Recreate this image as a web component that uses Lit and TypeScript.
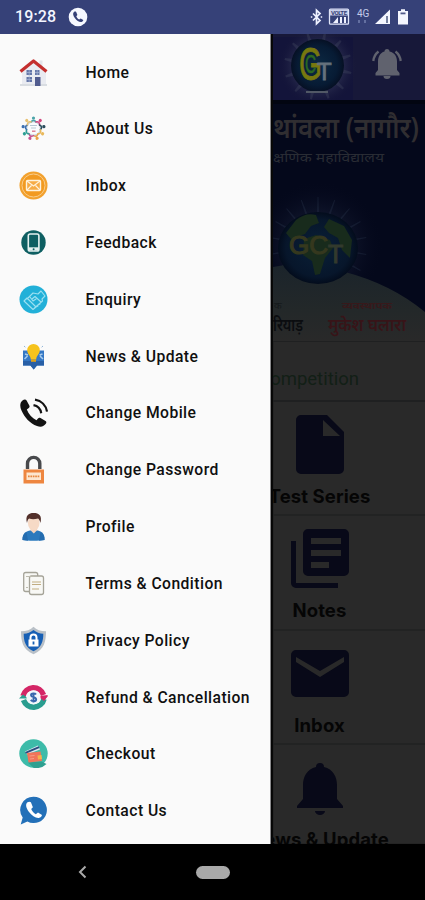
import { LitElement, html, svg, css } from "lit";
import { customElement } from "lit/decorators.js";

const spin = (n: number, d: (a: number, i: number) => unknown) =>
  Array.from({ length: n }, (_, i) => d((i * 360) / n, i));

const dots = ["#4aa3a8", "#d3447c", "#2b4d5c", "#e9b85a", "#e9a24a", "#c9508f", "#2c9f93", "#3c6fb0", "#e8c070"];

const icons = {
  home: svg`<path d="M3 14 15 4l12 10v12H3z" fill="#e9ebf1"/><path d="M1 26h27v2H1z" fill="#d9dde2"/>
    <path d="M20.500 2.500h3v6h-3z" fill="#e3e5ea"/>
    <path d="M1.500 13.500 14.500 3 27.500 13.500" fill="none" stroke="#c42f2e" stroke-width="3.200" stroke-linejoin="round"/>
    <path d="M7.500 12h5.500v5H7.500zM16 12h4.500v5H16zM7.500 19h5.500v5H7.500z" fill="#6476a8"/><path d="M16 19h5.500v9H16z" fill="#505b8e"/>
    <path d="M10.200 12v12M7 14.500h6M18.200 12v5M16 14.500h4.500M7 21.500h6" stroke="#a9b6d4" stroke-width=".7"/>`,
  about: svg`<circle cx="14.500" cy="14.500" r="7" fill="#fafbfc" stroke="#c3d2de" stroke-width="1.500"/>
    ${spin(9, (a, i) => svg`<g transform=${`rotate(${a} 14.500 14.500)`}><circle cx="14.500" cy="4" r="1.600" fill=${dots[i]}/><path d="M11.800 8.300q2.700-4 5.400 0" fill="none" stroke=${dots[i]} stroke-width="1.500"/></g>`)}
    <path d="M11 11.500h7M12 14h5" stroke="#b7c9d4" stroke-width="1"/><path d="M13 17.200h3.500" stroke="#d9728a" stroke-width="1.300"/>`,
  inbox: svg`<circle cx="14.500" cy="14.500" r="14" fill="#f2a12e"/><circle cx="14.500" cy="14.500" r="11.500" fill="#f29a20" stroke="#f9cd8c" stroke-width="1"/>
    <rect x="7.500" y="9.500" width="14" height="10" rx="1" fill="#f6ab45" stroke="#fff2dc" stroke-width="1.400"/>
    <path d="m8 10 6.500 5 6.500-5M8 19l4.500-4.500M21 19l-4.500-4.500" fill="none" stroke="#fff2dc" stroke-width="1.200"/>`,
  feedback: svg`<circle cx="14.500" cy="14.500" r="12.200" fill="#0e5f62"/><rect x="9.300" y="6" width="10.600" height="17" rx="1.800" fill="#0e5f62" stroke="#e4f1f0" stroke-width="1.600"/>
    <path d="M9.500 19.300h10.300v3.200H9.500z" fill="#e4f1f0"/><circle cx="14.600" cy="21.200" r="1" fill="#0e5f62"/>`,
  enquiry: svg`<circle cx="14.500" cy="14.500" r="14" fill="#22b0d8"/><g fill="none" stroke="#9be0f1" stroke-width="1.100" stroke-linejoin="round" stroke-linecap="round">
    <path d="m5 16 3-3 9 9-3 2.500zM8 14l6-6 5 1 3-3 4 5-3 3 .5 2-8 7M13 14l3-2.500 6 5.500M11 12l3 4 3-2M17 22l2-1M19 20l2-1"/></g>`,
  news: svg`<path d="M4 8.500h21v15h-7l-3.300 4-3.300-4H4z" fill="#3477c4"/><path d="M4 19h21v4.500h-7l-3.300 4-3.300-4H4z" fill="#285fa6"/>
    <path d="m5.500 17 3-3M24 17l-3-3M6 12l3 1M23.500 12l-3 1" stroke="#a8cced" stroke-width="1.500"/>
    <path d="M14.500 2a6.300 6.300 0 0 1 6.300 6.300c0 4-3.300 5-3.600 9.200h-5.400c-.3-4.200-3.600-5.200-3.600-9.200A6.300 6.300 0 0 1 14.500 2z" fill="#f6c31c"/>
    <path d="M12 17.500h5v2.300h-5z" fill="#dfa018"/><path d="m5 4 1.300 1.200M24 4l-1.300 1.200" stroke="#8fb4d8"/>`,
  mobile: svg`<path d="M3.500 2.500C1 4.500.5 8 2.500 12.500 5.500 19.500 11 25.500 18 28c4 1.400 7 .5 9-2.500.6-1 .4-1.800-.5-2.400L21.500 20c-1-.6-1.800-.4-2.500.4l-1.500 1.800C13 20 9.500 16 7.800 11.500l2-1.600c.9-.7 1-1.500.5-2.500L7.600 2.600C6.800 1 5 1.300 3.500 2.500z" fill="#131313"/>
    <path d="M14.500 7.200c4.200.8 7 3.700 7.700 8M16 1.700c6.500 1 11 5.700 12 12" fill="none" stroke="#131313" stroke-width="2.200"/>`,
  password: svg`<path d="M8.500 14V8.500a6 6 0 0 1 12.300 0V14" fill="none" stroke="#48494c" stroke-width="3.400"/>
    <path d="M4.500 14.500h20.500V28.500H4.500z" fill="#ee8640"/><path d="M7.500 17.500h14.500v7.500H7.500z" fill="#fde6cf"/><path d="M9 21.300h11.500" stroke="#e7873f" stroke-width="1.800" stroke-dasharray="1.700 .7"/>`,
  profile: svg`<path d="M3.500 28c-.5-6.500 4-10 11.300-10s11.300 3.500 10.700 10c-5 1-17 1-22 0z" fill="#2b79bd"/><path d="M3.500 28c0-4 1-6.500 4-8L9 28.700zM25.500 28c0-4-1-6.500-4-8L20 28.700z" fill="#246caf"/>
    <path d="m11.500 18.200 3.300 3.300 3.300-3.300V15h-6.600z" fill="#f3d3bd"/><ellipse cx="14.700" cy="11" rx="5.800" ry="7.400" fill="#f6dac6"/>
    <path d="M8 11C6 3.500 9.500 1 14.700 1s8.700 2.500 6.700 10c-.5-2.500-1.300-3.500-2.300-4.500-4 1-6.600.8-9 0C9 7.500 8.400 8.500 8 11z" fill="#53302a"/>`,
  terms: svg`<g fill="#f8f8f5" stroke="#a5a398" stroke-width="1.300"><rect x="4.700" y="3.500" width="14" height="19" rx="2"/><rect x="10.500" y="7" width="14" height="18.500" rx="2"/></g>
    <path d="M7 7.500h8M7 18.500h2" stroke="#bdbbaf"/><path d="M13 13h9M13 15.500h9M13 20h7" stroke="#c1ad82" stroke-width="1.200"/>`,
  privacy: svg`<path d="M14.500.8c3 3.200 7 4.300 12.500 4.500 0 10-1.500 18-12.500 23C3.500 23.300 2 15.300 2 5.300 7.500 5.100 11.500 4 14.500.8z" fill="#b9c0c7"/>
    <path d="M14.500 4c3 2.500 6 3.500 9.800 3.800 0 7.500-1.500 13.500-9.800 17.500-8.300-4-9.800-10-9.800-17.500C8.500 7.500 11.500 6.500 14.500 4z" fill="#165fb5"/>
    <path d="M11.500 14v-2.500a3 3 0 0 1 6 0V14" fill="none" stroke="#fff" stroke-width="2"/><path d="M9.500 13.500h10v7h-10z" fill="#fff"/><path d="M14.500 15.500v3" stroke="#165fb5" stroke-width="1.800"/>`,
  refund: svg`<path d="M4 13a10.700 10.700 0 0 1 20.500-1" fill="none" stroke="#d42666" stroke-width="5.500"/><path d="m19.500 13 9.500-1-4.500 6z" fill="#d42666"/>
    <path d="M25 16A10.700 10.700 0 0 1 4.500 17" fill="none" stroke="#2a9d8f" stroke-width="5.500"/><path d="m0 15.500 4-4 5.500 4z" fill="#2a9d8f"/><path d="m20 14 9-1-4 5z" fill="#d42666"/>
    <circle cx="14.500" cy="14.300" r="7" fill="#f3f7fb"/><path d="M17 11.500c-1-1.500-5-1.500-5 .7 0 2.500 5.200 1.500 5.200 4.200 0 2.200-4.200 2.300-5.400.5M14.500 9.500v10" fill="none" stroke="#3968ad" stroke-width="1.900"/>`,
  checkout: svg`<circle cx="14.500" cy="14.500" r="14.200" fill="#3dbba9"/><path d="m9 23.500 13.500-1 5 2.500A14.200 14.200 0 0 1 14.500 28.700z" fill="#2f9f90"/>
    <path d="m6 12.500 13-6 2 4-13 5z" fill="#dce9f2"/><path d="m6.500 13.800 13.600-5.600" stroke="#294c7e" stroke-width="2"/>
    <path d="m8 14 13.500-1.500L23 22l-13.500 1.500z" fill="#f1745a"/><path d="m18.500 16.500 4-.4.500 4-4 .4z" fill="#f3b44b"/><path d="m10.500 17 5-.5M11 20l4-.5" stroke="#f7a08d" stroke-width=".9"/>`,
  contact: svg`<path d="M14.700.7a13.200 13.200 0 1 1-6.300 24.800L1.700 28.500l2-7A13.200 13.200 0 0 1 14.700.7z" fill="#2370b8"/>
    <path d="M8.500 6.300c-2.300 1.700-1.500 5.700 1.300 9.400 3 4 7 6.700 10 6.300 1.700-.3 3-1.600 3.200-3l-4-2.600-2.200 1.800c-2-1-3.800-3-4.600-5.200l1.700-1.800-2-5c-1-.8-2.300-.7-3.400.1z" fill="#fff"/>`,
};

const menu: [string, unknown][] = [
  ["Home", icons.home], ["About Us", icons.about], ["Inbox", icons.inbox], ["Feedback", icons.feedback],
  ["Enquiry", icons.enquiry], ["News & Update", icons.news], ["Change Mobile", icons.mobile],
  ["Change Password", icons.password], ["Profile", icons.profile], ["Terms & Condition", icons.terms],
  ["Privacy Policy", icons.privacy], ["Refund & Cancellation", icons.refund], ["Checkout", icons.checkout],
  ["Contact Us", icons.contact],
];

const tiles: [string, unknown][] = [
  ["Test Series", svg`<path fill-rule="evenodd" d="M17 6h26l17 17v37a5 5 0 0 1-5 5H17a5 5 0 0 1-5-5V11a5 5 0 0 1 5-5zm22 5v16h17z"/>`],
  ["Notes", svg`<path d="M7 18h5v42h42v5H12a5 5 0 0 1-5-5z"/><path fill-rule="evenodd" d="M24 6h36a5 5 0 0 1 5 5v37a5 5 0 0 1-5 5H24a5 5 0 0 1-5-5V11a5 5 0 0 1 5-5zm3 9v6h30v-6zm0 12v6h30v-6zm0 12v6h18v-6z"/>`],
  ["Inbox", svg`<path fill-rule="evenodd" d="M12 12h48a5 5 0 0 1 5 5v37a5 5 0 0 1-5 5H12a5 5 0 0 1-5-5V17a5 5 0 0 1 5-5zm0 7v5l24 15 24-15v-5L36 33z"/>`],
  ["News & Update", svg`<path d="M36 11a4 4 0 0 1 4 4c9 2 13 10 13 18v14l6 7v2H13v-2l6-7V33c0-8 4-16 13-18a4 4 0 0 1 4-4zM31 59h10a5 4 0 0 1-10 0z"/>`],
];

@customElement("app-root")
export class AppRoot extends LitElement {
  static styles = css`
    :host { display: flex; flex-direction: column; width: 425px; height: 900px; overflow: hidden; background: #000; font-family: Roboto, "Noto Sans", sans-serif; }
    svg { display: block; flex: none; }
    .status { height: 34px; flex: none; box-sizing: border-box; background: #364178; color: #f4f6ff; display: flex; align-items: center; padding: 0 14px 0 15px; }
    .time { font-size: 16px; font-weight: 500; letter-spacing: .1px; width: 53px; line-height: 36px; }
    .signals { margin-left: auto; }
    .body { flex: 1; display: flex; min-height: 0; }
    .drawer { width: 271px; flex: none; box-sizing: border-box; padding-top: 9.600px; background: #fafafa; border-right: 1px solid #8a8a8c; }
    .item { height: 56.830px; display: flex; align-items: center; padding-left: 19px; gap: 37.500px; color: #101010; font-size: 15.700px; font-weight: 500; letter-spacing: .44px; white-space: nowrap; }
    .main { flex: 1; min-width: 0; display: flex; flex-direction: column; align-items: flex-end; overflow: hidden; background: #292929; box-shadow: inset 2px 0 1px #050505; }
    .bar { width: 152px; height: 66px; flex: none; background: #171839; display: flex; }
    .banner { width: 152px; height: 241px; flex: none; display: block; }
    .ticker { width: 152px; height: 61px; flex: none; box-sizing: border-box; border-top: 1px solid #1f2021; border-bottom: 2px solid #1f2021; color: #121f16; font-size: 18.500px; line-height: 74px; display: flex; justify-content: flex-end; padding-right: 66px; white-space: nowrap; overflow: hidden; }
    .tiles { width: 152px; flex: 1; min-height: 0; overflow: hidden; display: flex; flex-direction: column; align-items: flex-end; }
    .tile { width: 211px; height: 114.300px; flex: none; box-sizing: border-box; border-bottom: 2px solid #222323; padding-top: 7px; display: flex; flex-direction: column; align-items: center; color: #050505; font: 700 18.500px/31px Inter, sans-serif; letter-spacing: .1px; white-space: nowrap; }
    .tile svg { fill: #080918; }
    .nav { height: 56px; flex: none; background: #000; display: flex; align-items: center; padding-left: 77px; }
    .pill { width: 34px; height: 13px; border-radius: 7px; background: #a9a9a9; margin-left: 107px; }
  `;

  render() {
    return html`
      <div class="status">
        <div class="time">19:28</div>
        <svg width="20" height="20" viewBox="0 0 20 20"><circle cx="10" cy="10" r="9.300" fill="#f6f8ff"/><path d="M6 5c-1.500 1-1 3.500.8 6 2 2.700 4.600 4.400 6.600 4 1-.2 1.700-1 1.900-1.900l-2.600-1.700-1.500 1.200c-1.300-.7-2.300-1.900-2.900-3.300l1.100-1.200L8.200 5c-.6-.6-1.500-.5-2.200 0z" fill="#364178"/></svg>
        <svg class="signals" width="102" height="20" viewBox="0 0 102 20">
          <path d="m4 6.500 7 7-3.500 3.200V3.300L11 6.500l-7 7M1.800 10h1.500M11.700 10h1.500" fill="none" stroke="#eef1ff" stroke-width="1.700"/>
          <rect x="20.500" y="2.200" width="19" height="15" rx="1" fill="none" stroke="#dfe4f8" stroke-width="1.300"/><path d="M21 2.500h18v6H21z" fill="#c8cfea"/>
          <text x="22" y="8" font-size="6" font-weight="700" fill="#364178" textLength="16">VOLTE</text>
          <path d="M24 16l5-6v6zM31 10h2v6h-2zM35 10h2v6h-2z" fill="#eef1ff"/>
          <text x="48" y="10" font-size="10" fill="#c3cae8">4G</text><path d="M50 13v3M56 13v3" stroke="#7480ae" stroke-width="1.500"/>
          <path d="M66 17 81 2.500V17z" fill="#f4f6ff"/><path d="M77 9h2v7h-2z" fill="#75809f"/>
          <path d="M92 2.200h4V4h3v13.500H89V4h3z" fill="#f4f6ff"/><path d="M91.500 5.500h5v1.800h-5z" fill="#515b8b"/>
        </svg>
      </div>
      <div class="body">
        <div class="drawer">
          ${menu.map(([label, icon]) => html`<div class="item"><svg width="29" height="29" viewBox="0 0 29 29">${icon}</svg><span>${label}</span></div>`)}
        </div>
        <div class="main">
          <div class="bar">${this.bar()}</div>
          ${this.banner()}
          <div class="ticker"><span>Competition</span></div>
          <div class="tiles">
            ${tiles.map(([label, icon]) => html`<div class="tile"><svg width="72" height="72" viewBox="0 0 72 72">${icon}</svg><span>${label}</span></div>`)}
          </div>
        </div>
      </div>
      <div class="nav">
        <svg width="12" height="14" viewBox="0 0 12 14"><path d="M8.500 1.500 3 7l5.500 5.500" fill="none" stroke="#a9a9a9" stroke-width="2"/></svg>
        <div class="pill"></div>
      </div>`;
  }

  bar() {
    return html`<svg width="152" height="66" viewBox="273 34 152 66">
      <defs>
        <radialGradient id="orb"><stop offset="0" stop-color="#0c2943"/><stop offset=".75" stop-color="#071b34"/><stop offset="1" stop-color="#061024"/></radialGradient>
        <radialGradient id="glow"><stop offset=".5" stop-color="#3b4160"/><stop offset="1" stop-color="#151536" stop-opacity="0"/></radialGradient>
      </defs>
      <path d="M273 37h80v64h-80z" fill="#13143a"/>
      <circle cx="318" cy="66" r="40" fill="url(#glow)" opacity=".7"/>
      ${spin(12, (a) => svg`<path transform=${`rotate(${a + 12} 318 66)`} d="M314 66 317 32h2l3 34z" fill="#464b62" opacity=".35"/>`)}
      <circle cx="317.500" cy="65.500" r="26.500" fill="url(#orb)"/>
      <text x="299" y="80" font-family="Liberation Sans" font-size="46" textLength="23" lengthAdjust="spacingAndGlyphs" fill="#77780f" stroke="#77780f" stroke-width=".8">G</text>
      <text x="305" y="73" font-family="Liberation Sans" font-size="25" textLength="11" lengthAdjust="spacingAndGlyphs" fill="#2b6a22" stroke="#2b6a22" stroke-width=".6">C</text>
      <text x="317" y="80" font-family="Liberation Sans" font-size="24" fill="#65717c" stroke="#65717c" stroke-width=".8">T</text>
      <path d="M306 92h22" stroke="#515866" stroke-width="2"/>
      <path d="M387 49a2.500 2.500 0 0 1 2.500 2.500c5.500 1.300 7.500 5.500 7.500 10V70l2.500 3v2.500h-24V73l2.500-3v-8.500c0-4.500 2-8.700 6.500-10A2.500 2.500 0 0 1 387 49zM383.500 76h7a3.500 3 0 0 1-7 0z" fill="#60626e"/>
      <path d="M378.500 51.500q-4.500 3.500-5.200 9.500M395.500 51.500q4.500 3.500 5.200 9.500" fill="none" stroke="#60626e" stroke-width="2.300"/>
    </svg>`;
  }

  banner() {
    return html`<svg class="banner" width="152" height="241" viewBox="273 100 152 241">
      <defs>
        <radialGradient id="earth"><stop offset="0" stop-color="#092037"/><stop offset=".8" stop-color="#07162b"/><stop offset="1" stop-color="#030c1c"/></radialGradient>
        <radialGradient id="halo"><stop offset=".4" stop-color="#28324d"/><stop offset="1" stop-color="#05081c" stop-opacity="0"/></radialGradient>
        <linearGradient id="ground" x2="0" y2="1"><stop offset="0" stop-color="#1b242b"/><stop offset=".6" stop-color="#232829"/><stop offset="1" stop-color="#292929"/></linearGradient>
      </defs>
      <path d="M273 100h152v241H273z" fill="#04081b"/><path d="M273 100h152v4H273z" fill="#020511"/>
      <circle cx="318" cy="246" r="65" fill="url(#halo)" opacity=".4"/>
      ${spin(18, (a) => svg`<path transform=${`rotate(${a} 318 246)`} d="M316 246 317.500 197h1l1.500 49z" fill="#303b52" opacity=".3"/>`)}
      <path d="M273 267q35-8 72 5 46 12 80 40v29H273z" fill="url(#ground)"/>
      <g font-family="Noto Sans, sans-serif">
        <text x="273" y="138" font-size="28" font-weight="600" textLength="146" lengthAdjust="spacingAndGlyphs" fill="#302e31">थांवला (नागौर)</text>
        <text x="273" y="162" font-size="13" textLength="111" lengthAdjust="spacingAndGlyphs" fill="#292c34">क्षणिक महाविद्यालय</text>
        <text x="274" y="309" font-size="10" fill="#15191b">क</text>
        <text x="273" y="331" font-size="18" font-weight="600" textLength="30" lengthAdjust="spacingAndGlyphs" fill="#0b0d10">रियाड़</text>
        <text x="342" y="309" font-size="10" font-weight="700" textLength="50" lengthAdjust="spacingAndGlyphs" fill="#37191b">व्यवस्थापक</text>
        <text x="328" y="331" font-size="18" font-weight="600" textLength="78" lengthAdjust="spacingAndGlyphs" fill="#381418">मुकेश घलारा</text>
      </g>
      <ellipse cx="318" cy="248" rx="40" ry="36" fill="url(#earth)"/>
      <path d="M296 220q10-8 20-5l3 8-8 3-6 8-14 5-5-6zM304 239l12-4 14 5 3 8-8 10-5 16-5 1-3-14-9-6zM329 219l15 7 8 14-2 18-8-8-4-12-9-5-5-6z" fill="#182b1c"/>
      <text x="289" y="254" font-family="Liberation Sans" font-size="25" textLength="39" lengthAdjust="spacingAndGlyphs" fill="#35381e" stroke="#35381e" stroke-width="1.200">GC</text>
      <text x="328" y="263" font-family="Liberation Sans" font-size="25" fill="#323a2d" stroke="#323a2d">T</text>
    </svg>`;
  }
}
